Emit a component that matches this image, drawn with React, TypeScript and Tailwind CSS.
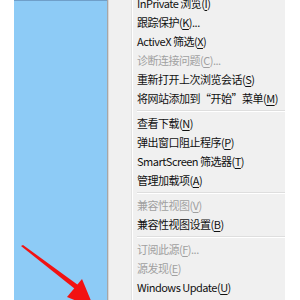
import type { ReactNode } from "react"

type Item = {
    pre: string
    key?: string
    post?: string
    disabled?: boolean
}

const groups: Item[][] = [
    [
        { pre: "InPrivate 浏览(", key: "I", post: ")" },
        { pre: "跟踪保护(", key: "K", post: ")..." },
        { pre: "ActiveX 筛选(", key: "X", post: ")" },
        { pre: "诊断连接问题(", key: "C", post: ")...", disabled: true },
        { pre: "重新打开上次浏览会话(", key: "S", post: ")" },
        { pre: "将网站添加到“开始”菜单(", key: "M", post: ")" },
    ],
    [
        { pre: "查看下载(", key: "N", post: ")" },
        { pre: "弹出窗口阻止程序(", key: "P", post: ")" },
        { pre: "SmartScreen 筛选器(", key: "T", post: ")" },
        { pre: "管理加载项(", key: "A", post: ")" },
    ],
    [
        { pre: "兼容性视图(", key: "V", post: ")", disabled: true },
        { pre: "兼容性视图设置(", key: "B", post: ")" },
    ],
    [
        { pre: "订阅此源(", key: "F", post: ")...", disabled: true },
        { pre: "源发现(", key: "E", post: ")", disabled: true },
        { pre: "Windows Update(", key: "U", post: ")" },
    ],
]

function Row({ item }: { item: Item }) {
    return (
        <div
            className={`h-[19px] flex items-center whitespace-nowrap text-[11px] tracking-[-0.5px] ${
                item.disabled ? "text-[#a0a0a0]" : "text-[#111111]"
            }`}
        >
            {item.pre}
            <span className="underline underline-offset-2">{item.key}</span>
            {item.post}
        </div>
    )
}

function Separator() {
    return (
        <div className="h-[6px] flex flex-col justify-center">
            <div className="border-t border-[#dedede] border-b border-b-white" />
        </div>
    )
}

export default function App() {
    const rows: ReactNode[] = []
    groups.forEach((g, gi) => {
        if (gi > 0) rows.push(<Separator key={`sep-${gi}`} />)
        g.forEach((item) => rows.push(<Row key={item.pre} item={item} />))
    })

    return (
        <div
            className="w-[300px] h-[300px] flex bg-white relative overflow-hidden"
            style={{ fontFamily: '"Noto Sans CJK SC", "Noto Sans", sans-serif' }}
        >
            <div className="w-[14px] shrink-0 bg-white" />
            <div className="w-[93px] shrink-0 bg-[#8dcbf6] border-t border-[#6f9fc9]" />
            <div className="w-[2px] shrink-0 border-l border-[#a6a6a6] border-r border-r-[#d8d8d8]" />
            <div className="w-[176px] shrink-0 bg-[#f0f0f0] flex">
                <div className="w-[22px] shrink-0" />
                <div className="w-[2px] shrink-0 border-l border-[#e2e2e2] border-r border-r-white" />
                <div className="flex-1 mt-[-6px]">
                    <div className="pl-[4px]">{rows}</div>
                </div>
            </div>
            <div className="flex-1 bg-white" />

            {/* red arrow pointing at the menu */}
            <svg className="absolute left-0 top-0" width="300" height="300" viewBox="0 0 300 300">
                <polygon points="21,246 23,245 78,285 75,289" fill="#f21212" />
                <polygon points="67,297 82,279 94,308" fill="#f21212" />
            </svg>
        </div>
    )
}
